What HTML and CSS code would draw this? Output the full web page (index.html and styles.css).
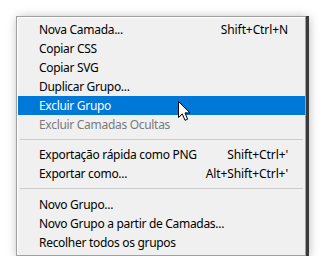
FILE: index.html
```html
<!DOCTYPE html>
<html lang="pt">
<head>
    <meta charset="UTF-8">
    <meta name="viewport" content="width=device-width, initial-scale=1.0">
    <title>Menu de contexto</title>
    <link rel="stylesheet" href="styles.css">
</head>
<body>
    <div class="menu">
        <div class="item"><span>Nova Camada...</span><span class="key">Shift+Ctrl+N</span></div>
        <div class="item"><span>Copiar CSS</span></div>
        <div class="item"><span>Copiar SVG</span></div>
        <div class="item"><span>Duplicar Grupo...</span></div>
        <div class="item active"><span>Excluir Grupo</span></div>
        <div class="item disabled"><span>Excluir Camadas Ocultas</span></div>
        <div class="separator"></div>
        <div class="item"><span>Exportação rápida como PNG</span><span class="key">Shift+Ctrl+'</span></div>
        <div class="item"><span>Exportar como...</span><span class="key">Alt+Shift+Ctrl+'</span></div>
        <div class="separator wide"></div>
        <div class="item"><span>Novo Grupo...</span></div>
        <div class="item"><span>Novo Grupo a partir de Camadas...</span></div>
        <div class="item"><span>Recolher todos os grupos</span></div>

        <svg class="cursor" width="13" height="21" viewBox="0 0 13 21">
            <path d="M0.5 0.5 L0.5 16.5 L4.3 12.9 L7 19.3 L9.6 18.2 L7 11.9 L12 11.9 Z"
                  fill="#fff" stroke="#000" stroke-width="1" stroke-linejoin="miter"/>
        </svg>
    </div>
</body>
</html>
```

FILE: styles.css
```css
body {
    margin: 0;
    background-color: #fff;
    font-family: "Noto Sans", "Open Sans", sans-serif;
    font-size: 12px;
    color: #000;
}
.menu {
    position: relative;
    margin: 16px 0 0 16px;
    width: 287px;
    padding: 3px 0 3px 1px;
    background-color: #f0f0f0;
    border: 1px solid #a0a0a0;
    box-shadow: inset 1px 1px 0 #fff, 3px 0 0 #3a3a3a, 2px 2px 10px rgba(0, 0, 0, 0.35);
}
.item {
    display: flex;
    justify-content: space-between;
    align-items: center;
    height: 19px;
    padding: 0 17px 0 21px;
    letter-spacing: -0.3px;
    white-space: nowrap;
}
.item .key {
    letter-spacing: -0.1px;
}
.item.active {
    background-color: #0078d7;
    color: #fff;
}
.item.disabled {
    color: #7a7a7a;
}
.separator {
    height: 11px;
    margin: 0 2px;
    position: relative;
}
.separator::after {
    content: "";
    position: absolute;
    left: 0;
    right: 0;
    top: 5px;
    border-top: 1px solid #cbcbcb;
}
.separator.wide {
    height: 12px;
}
.cursor {
    position: absolute;
    left: 161px;
    top: 84px;
}
```
